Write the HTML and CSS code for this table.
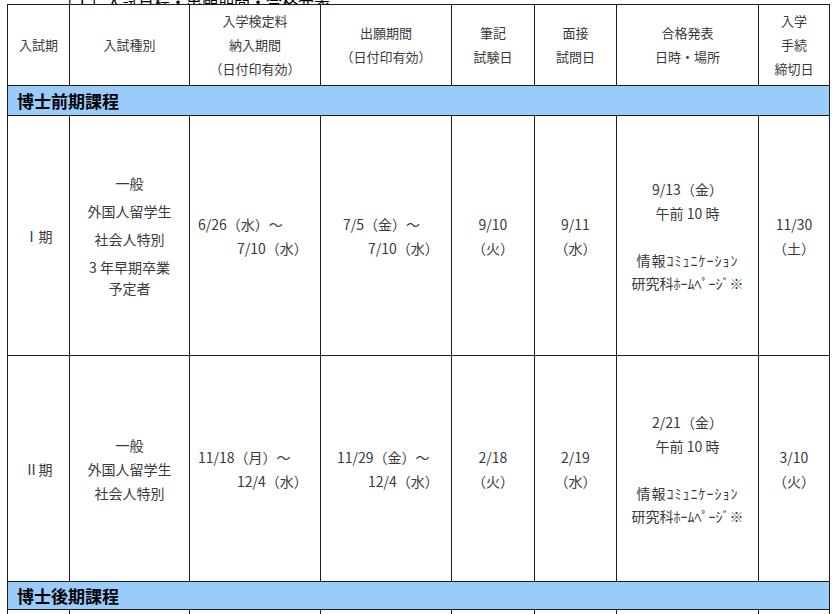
FILE: index.html
```html
<!DOCTYPE html>
<html lang="ja">
<head>
<meta charset="utf-8">
<title>入試日程</title>
<link rel="stylesheet" href="styles.css">
</head>
<body>
<div class="caption"><span>（１）入試日程・出願期間・合格発表</span></div>
<table class="sched">
  <colgroup>
    <col class="c1"><col class="c2"><col class="c3"><col class="c4"><col class="c5"><col class="c6"><col class="c7"><col class="c8">
  </colgroup>
  <tr class="head">
    <th class="sm">入試期</th>
    <th>入試種別</th>
    <th>入学検定料<br>納入期間<br>（日付印有効）</th>
    <th>出願期間<br>（日付印有効）</th>
    <th>筆記<br>試験日</th>
    <th>面接<br>試問日</th>
    <th>合格発表<br>日時・場所</th>
    <th>入学<br>手続<br>締切日</th>
  </tr>
  <tr class="section s1">
    <td colspan="8">博士前期課程</td>
  </tr>
  <tr class="r1">
    <td>Ⅰ期</td>
    <td class="kind k1">
      <p>一般</p>
      <p>外国人留学生</p>
      <p>社会人特別</p>
      <p class="wrap">3 年早期卒業<br>予定者</p>
    </td>
    <td class="range"><div class="l1 a">6/26（水）～</div><div class="l2">7/10（水）</div></td>
    <td class="range"><div class="l1 b">7/5（金）～</div><div class="l2">7/10（水）</div></td>
    <td>9/10<br>（火）</td>
    <td>9/11<br>（水）</td>
    <td class="result"><div>9/13（金）</div><div>午前 10 時</div><div class="blank"></div><div class="place wide">情報ｺﾐｭﾆｹｰｼｮﾝ</div><div class="place">研究科ﾎｰﾑﾍﾟｰｼﾞ※</div></td>
    <td>11/30<br>（土）</td>
  </tr>
  <tr class="r2">
    <td>Ⅱ期</td>
    <td class="kind k2">
      <p>一般</p>
      <p>外国人留学生</p>
      <p>社会人特別</p>
    </td>
    <td class="range"><div class="l1 a">11/18（月）～</div><div class="l2">12/4（水）</div></td>
    <td class="range"><div class="l1 c">11/29（金）～</div><div class="l2">12/4（水）</div></td>
    <td>2/18<br>（火）</td>
    <td>2/19<br>（水）</td>
    <td class="result"><div>2/21（金）</div><div>午前 10 時</div><div class="blank"></div><div class="place wide">情報ｺﾐｭﾆｹｰｼｮﾝ</div><div class="place">研究科ﾎｰﾑﾍﾟｰｼﾞ※</div></td>
    <td>3/10<br>（火）</td>
  </tr>
  <tr class="section s2">
    <td colspan="8">博士後期課程</td>
  </tr>
  <tr class="r3">
    <td></td><td></td><td></td><td></td><td></td><td></td><td></td><td></td>
  </tr>
</table>
</body>
</html>
```

FILE: styles.css
```css
html, body {
  margin: 0;
  padding: 0;
  background: #ffffff;
}

body {
  font-family: "Noto Sans CJK JP", "Noto Sans", sans-serif;
  color: #3a3a3a;
  overflow: hidden;
}

.caption {
  height: 4px;
  overflow: hidden;
  display: flex;
  align-items: flex-end;
  padding-left: 58px;
}

.caption span {
  font-size: 16px;
  line-height: 16px;
  color: #000;
  margin-bottom: -5px;
}

.sched {
  margin-left: 7px;
  width: 822px;
  table-layout: fixed;
  border-collapse: collapse;
  font-size: 14px;
}

.c1 { width: 62px; }
.c2 { width: 120px; }
.c3 { width: 131px; }
.c4 { width: 131px; }
.c5 { width: 83px; }
.c6 { width: 82px; }
.c7 { width: 142px; }
.c8 { width: 71px; }

.sched th,
.sched td {
  border: 1px solid #1c1c1c;
  padding: 0;
  text-align: center;
  vertical-align: middle;
  line-height: 24px;
}

.sched th {
  font-weight: normal;
  font-size: 13px;
}

.head { height: 81px; }

.section td {
  background: #99cbfb;
  color: #000;
  font-weight: bold;
  font-size: 17px;
  text-align: left;
  padding-left: 9px;
  line-height: 26px;
}

.s1 { height: 30px; }
.s2 { height: 28px; }

.r1 { height: 240px; }
.r2 { height: 226px; }
.r3 { height: 30px; }

.kind p {
  margin: 0;
}

.k1 p {
  line-height: 21px;
  margin-bottom: 7px;
}

.k1 p.wrap {
  margin-bottom: 0;
}

.k2 p {
  line-height: 24px;
}

.sched td.range {
  text-align: left;
}

.l1.a { padding-left: 8px; }
.l1.b { padding-left: 22px; }
.l1.c { padding-left: 16px; }
.l2 { padding-left: 47px; }

.blank { height: 24px; }

.place {
  font-size: 14px;
  line-height: 23px;
}

.place.wide {
  letter-spacing: 1px;
}
```
